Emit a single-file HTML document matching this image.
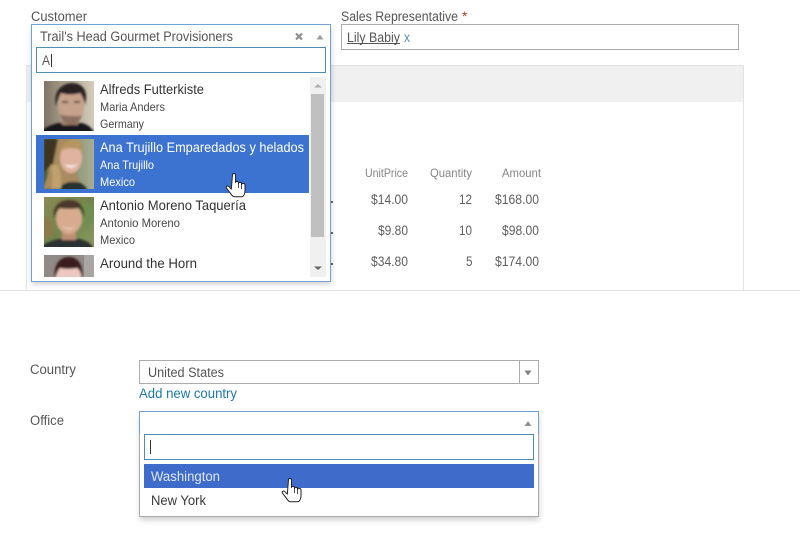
<!DOCTYPE html>
<html lang="en">
<head>
<meta charset="utf-8">
<title>Dropdowns</title>
<style>
html,body{margin:0;padding:0;background:#fff;width:800px;height:541px;overflow:hidden}
svg{display:block;position:absolute;left:0;top:0}
text{font-family:"Liberation Sans",sans-serif;font-size:13.5px;fill:#555}
.n{font-size:14px;fill:#333}
.s{font-size:12px;fill:#484848}
.h{font-size:12px;fill:#858585}
.v{font-size:13.5px;fill:#5f5f5f}
</style>
</head>
<body>
<svg width="800" height="541" viewBox="0 0 800 541" xmlns="http://www.w3.org/2000/svg">
<defs>
<filter id="b" x="-20%" y="-20%" width="140%" height="140%"><feGaussianBlur stdDeviation="1.1"/></filter>
<filter id="sh" x="-10%" y="-10%" width="120%" height="120%"><feGaussianBlur stdDeviation="3"/></filter>
<clipPath id="c1"><rect x="44" y="81" width="50" height="50"/></clipPath>
<clipPath id="c2"><rect x="44" y="139" width="50" height="50"/></clipPath>
<clipPath id="c3"><rect x="44" y="197" width="50" height="50"/></clipPath>
<clipPath id="c4"><rect x="44" y="255" width="50" height="22"/></clipPath>
<linearGradient id="g1" x1="0" x2="1" y1="0" y2="0"><stop offset="0" stop-color="#7d7465"/><stop offset=".45" stop-color="#aca28e"/><stop offset="1" stop-color="#d4ccbb"/></linearGradient>
<linearGradient id="g2" x1="0" x2="1" y1="0" y2="0"><stop offset="0" stop-color="#4f5c3c"/><stop offset=".6" stop-color="#8f9478"/><stop offset="1" stop-color="#a8ad92"/></linearGradient>
<linearGradient id="g3" x1="0" x2="1" y1="0" y2="1"><stop offset="0" stop-color="#8b8a55"/><stop offset=".5" stop-color="#72844c"/><stop offset="1" stop-color="#8a9a60"/></linearGradient>
</defs>

<!-- background panel -->
<rect x="26.5" y="65.5" width="717" height="225" fill="#fff" stroke="#e3e3e3"/>
<rect x="27" y="66" width="716" height="36" fill="#f0f0f0"/>
<line x1="0" y1="290.5" x2="800" y2="290.5" stroke="#e3e3e3"/>

<!-- labels -->
<text x="31" y="21" textLength="56" lengthAdjust="spacingAndGlyphs">Customer</text>
<text x="341" y="21" textLength="117" lengthAdjust="spacingAndGlyphs">Sales Representative</text>
<text x="462" y="21" style="fill:#c0392b">*</text>

<!-- sales rep -->
<rect x="341.5" y="24.5" width="397" height="25" fill="#fff" stroke="#ababab"/>
<text x="347" y="42" textLength="53" lengthAdjust="spacingAndGlyphs">Lily Babiy</text>
<line x1="347" y1="43.5" x2="400" y2="43.5" stroke="#555"/>
<text x="404" y="42" textLength="6" lengthAdjust="spacingAndGlyphs" style="fill:#5a8db5">x</text>

<!-- table -->
<text class="h" x="365" y="177" textLength="43" lengthAdjust="spacingAndGlyphs">UnitPrice</text>
<text class="h" x="430" y="177" textLength="42" lengthAdjust="spacingAndGlyphs">Quantity</text>
<text class="h" x="502" y="177" textLength="39" lengthAdjust="spacingAndGlyphs">Amount</text>
<text class="v" x="371" y="204" textLength="37" lengthAdjust="spacingAndGlyphs">$14.00</text>
<text class="v" x="459" y="204" textLength="13" lengthAdjust="spacingAndGlyphs">12</text>
<text class="v" x="495" y="204" textLength="44" lengthAdjust="spacingAndGlyphs">$168.00</text>
<text class="v" x="378" y="235" textLength="30" lengthAdjust="spacingAndGlyphs">$9.80</text>
<text class="v" x="459" y="235" textLength="13" lengthAdjust="spacingAndGlyphs">10</text>
<text class="v" x="502" y="235" textLength="37" lengthAdjust="spacingAndGlyphs">$98.00</text>
<text class="v" x="371" y="266" textLength="37" lengthAdjust="spacingAndGlyphs">$34.80</text>
<text class="v" x="466" y="266" textLength="6.5" lengthAdjust="spacingAndGlyphs">5</text>
<text class="v" x="495" y="266" textLength="44" lengthAdjust="spacingAndGlyphs">$174.00</text>
<rect x="331" y="201" width="2" height="2" fill="#667"/>
<rect x="331" y="232" width="2" height="2" fill="#667"/>
<rect x="331" y="263" width="2" height="2" fill="#667"/>

<!-- customer dropdown -->
<rect x="32" y="28" width="299" height="256" fill="#000" opacity=".2" filter="url(#sh)"/>
<rect x="31.5" y="24.5" width="299" height="257" fill="#fff" stroke="#6fa2d9"/>
<text x="40" y="41" textLength="193" lengthAdjust="spacingAndGlyphs">Trail's Head Gourmet Provisioners</text>
<path d="M296 33.5l6 6M302 33.5l-6 6" stroke="#8f8f8f" stroke-width="2.2" fill="none"/>
<path d="M316.5 39.5l3.5-5 3.5 5z" fill="#a0a0a0"/>
<rect x="36.5" y="47.5" width="289" height="25" fill="#fff" stroke="#4a8fb3"/>
<text x="42" y="65" textLength="8" lengthAdjust="spacingAndGlyphs">A</text>
<line x1="51.5" y1="54" x2="51.5" y2="67" stroke="#333"/>

<!-- scrollbar -->
<rect x="310" y="77" width="16" height="200" fill="#f0f0f0"/>
<rect x="311" y="94" width="13" height="143" fill="#c0c0c0"/>
<path d="M314 87.5l4-3.5 4 3.5z" fill="#b0b0b0"/>
<path d="M314 266.5l4 3.5 4-3.5z" fill="#666"/>

<!-- selected row -->
<rect x="36" y="135" width="273" height="58" fill="#3c73d0"/>

<!-- avatar 1 -->
<g clip-path="url(#c1)">
<rect x="44" y="81" width="50" height="50" fill="url(#g1)"/>
<g filter="url(#b)">
<path d="M38 136c4-9 14-11 20-13h24c6 2 10 4 14 13z" fill="#17181a"/>
<rect x="62" y="112" width="16" height="13" fill="#a58370"/>
<ellipse cx="71" cy="105" rx="13" ry="19" fill="#c6a28c"/>
<path d="M56 106c-3-15 6-23 16-23s17 7 13 22c-1-5-3-10-5-12-6 2-14 2-19 0-2 3-3 8-5 13z" fill="#2a2420"/>
<path d="M60 114c3 9 8 11 12 11s8-3 10-10c-4 2-7 1-10 1s-8 0-12-2z" fill="#8d705f"/>
<rect x="62" y="101" width="6" height="2" fill="#5a4438"/>
<rect x="74" y="101" width="6" height="2" fill="#5a4438"/>
</g>
</g>

<!-- avatar 2 -->
<g clip-path="url(#c2)">
<rect x="44" y="139" width="50" height="50" fill="url(#g2)"/>
<g filter="url(#b)">
<path d="M58 137c-8 8-12 20-10 32 1 8-4 14-5 20h38c-2-10-6-14-5-24 2-12 2-22-4-28z" fill="#a88b5e"/>
<path d="M44 139h14l-5 25-9 8z" fill="#3c3522"/>
<ellipse cx="71" cy="158" rx="11" ry="15" fill="#e0b3a0"/>
<path d="M60 151c2-7 8-12 16-12 4 0 6 6 7 13-6-5-16-5-23-1z" fill="#b59560"/>
<path d="M65 164c4 2 9 2 12 0-2 5-10 5-12 0z" fill="#f6ede6"/>
<path d="M58 191c2-7 10-10 16-9 6-1 12 4 14 9z" fill="#26332f"/>
<path d="M50 165c3 8 3 16 1 24h10c1-8 0-16-3-24z" fill="#c0a06c"/>
</g>
</g>

<!-- avatar 3 -->
<g clip-path="url(#c3)">
<rect x="44" y="197" width="50" height="50" fill="url(#g3)"/>
<g filter="url(#b)">
<ellipse cx="86" cy="215" rx="8" ry="12" fill="#6f8f50"/>
<ellipse cx="47" cy="228" rx="6" ry="10" fill="#8d7a4a"/>
<path d="M40 250c2-7 12-9 18-11h22c6 2 12 4 14 11z" fill="#2a3331"/>
<rect x="62" y="228" width="14" height="12" fill="#bd8f74"/>
<ellipse cx="69" cy="219" rx="13" ry="15" fill="#d8ab8f"/>
<path d="M54 218c-2-12 6-18 15-18s17 6 15 18c-1-5-3-9-5-10-6 1-14 1-20 0-2 2-3 5-5 10z" fill="#4c382a"/>
<path d="M63 226c3 3 9 3 12 0-2 4-10 4-12 0z" fill="#f4e8e0"/>
</g>
</g>

<!-- avatar 4 -->
<g clip-path="url(#c4)">
<rect x="44" y="255" width="50" height="22" fill="#8f8a85"/>
<rect x="84" y="255" width="10" height="22" fill="#a8a6a2"/>
<g filter="url(#b)">
<ellipse cx="68" cy="277" rx="13" ry="14" fill="#ecc8c0"/>
<path d="M55 279c-2-15 5-22 14-22s15 8 13 22c-1-6-2-9-5-11-6 1-12 1-17 0-2 2-3 5-5 11z" fill="#3a1f1e"/>
</g>
</g>

<!-- list text -->
<text class="n" x="100" y="94" textLength="104" lengthAdjust="spacingAndGlyphs">Alfreds Futterkiste</text>
<text class="s" x="100" y="111" textLength="65" lengthAdjust="spacingAndGlyphs">Maria Anders</text>
<text class="s" x="100" y="128" textLength="44" lengthAdjust="spacingAndGlyphs">Germany</text>
<text class="n" x="100" y="152" textLength="204" lengthAdjust="spacingAndGlyphs" style="fill:#fff">Ana Trujillo Emparedados y helados</text>
<text class="s" x="100" y="169" textLength="54" lengthAdjust="spacingAndGlyphs" style="fill:#fff">Ana Trujillo</text>
<text class="s" x="100" y="186" textLength="35" lengthAdjust="spacingAndGlyphs" style="fill:#fff">Mexico</text>
<text class="n" x="100" y="210" textLength="146" lengthAdjust="spacingAndGlyphs">Antonio Moreno Taquería</text>
<text class="s" x="100" y="227" textLength="80" lengthAdjust="spacingAndGlyphs">Antonio Moreno</text>
<text class="s" x="100" y="244" textLength="35" lengthAdjust="spacingAndGlyphs">Mexico</text>
<text class="n" x="100" y="268" textLength="97" lengthAdjust="spacingAndGlyphs">Around the Horn</text>

<!-- hand 1 -->
<g stroke-linejoin="round">
<path d="M232.5 175c0-2 3-2 3 0v7.5c0-1.5 3-1.5 3 0v1c0-1.5 3-1.5 3 0v1c0-1.3 3.5-1.3 3.5 .2v6c0 3-1.5 6-3 6h-8c-1.5 0-2.5-2-4-4l-3.5-4.500c-1-1.700 1-3 2.5-1.500l2.300 2.500z" fill="#fff" stroke="#222" stroke-width="1"/>
<path d="M238.5 183v5M241.5 184v5" stroke="#222" stroke-width=".8" fill="none"/>
</g>

<!-- bottom form -->
<text x="30" y="374" textLength="46" lengthAdjust="spacingAndGlyphs">Country</text>
<text x="30" y="425" textLength="34" lengthAdjust="spacingAndGlyphs">Office</text>

<rect x="139.5" y="360.5" width="399" height="23" fill="#fff" stroke="#ababab"/>
<line x1="519.5" y1="361" x2="519.5" y2="383" stroke="#ababab"/>
<path d="M524.5 370.5h7l-3.5 5z" fill="#808080"/>
<text x="148" y="377" textLength="76" lengthAdjust="spacingAndGlyphs">United States</text>
<text x="139" y="398" textLength="98" lengthAdjust="spacingAndGlyphs" style="fill:#1a78ab">Add new country</text>

<!-- office dropdown -->
<rect x="140" y="415" width="399" height="105" fill="#000" opacity=".2" filter="url(#sh)"/>
<rect x="139.5" y="411.5" width="399" height="105" fill="#fff" stroke="#ababab"/>
<path d="M139.5 434V411.5H538.5V434" fill="none" stroke="#6fa2d9"/>
<path d="M524.5 426l3.5-5 3.5 5z" fill="#909090"/>
<rect x="144.5" y="434.5" width="389" height="25" fill="#fff" stroke="#4a8fb3"/>
<line x1="150.5" y1="440" x2="150.5" y2="454" stroke="#333"/>
<rect x="144" y="464" width="390" height="24" fill="#3f6ccb"/>
<text x="151" y="481" textLength="69" lengthAdjust="spacingAndGlyphs" style="fill:#dfe8fa">Washington</text>
<text x="151" y="505" textLength="55" lengthAdjust="spacingAndGlyphs" style="fill:#3a3a3a">New York</text>

<!-- hand 2 -->
<g transform="translate(56 305)" stroke-linejoin="round">
<path d="M232.5 175c0-2 3-2 3 0v7.5c0-1.5 3-1.5 3 0v1c0-1.5 3-1.5 3 0v1c0-1.3 3.5-1.3 3.5 .2v6c0 3-1.5 6-3 6h-8c-1.5 0-2.5-2-4-4l-3.5-4.500c-1-1.700 1-3 2.5-1.500l2.300 2.500z" fill="#fff" stroke="#222" stroke-width="1"/>
<path d="M238.5 183v5M241.5 184v5" stroke="#222" stroke-width=".8" fill="none"/>
</g>
</svg>
</body>
</html>
